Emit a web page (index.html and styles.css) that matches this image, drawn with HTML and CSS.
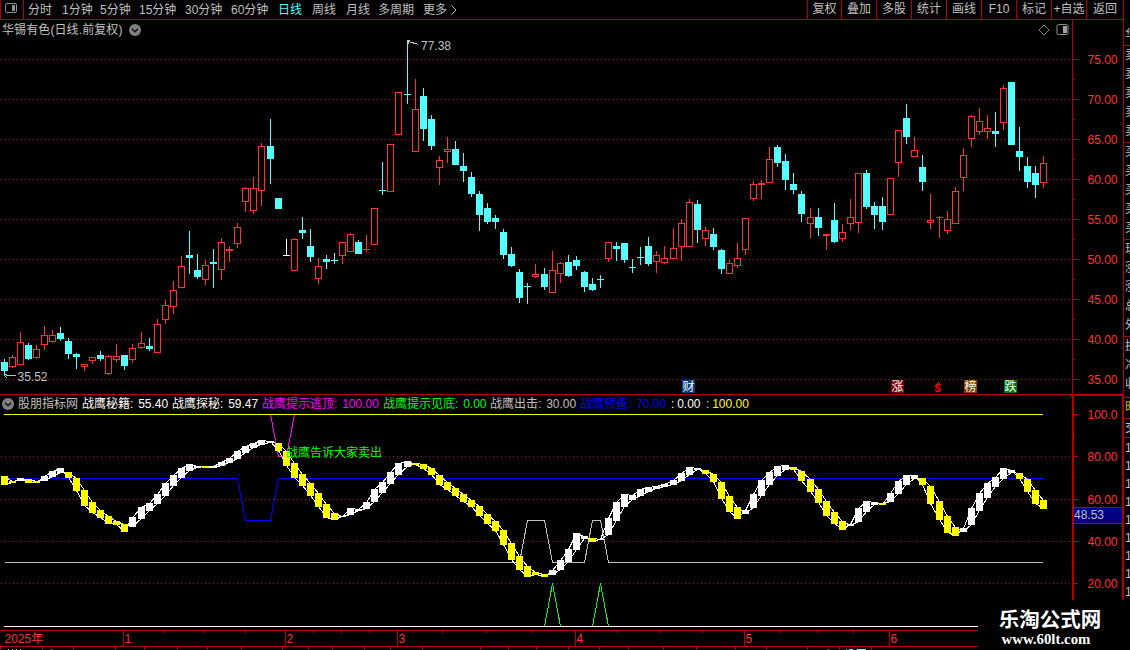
FILE: index.html
```html
<!DOCTYPE html>
<html lang="zh-CN">
<head>
    <meta charset="UTF-8">
    <meta name="viewport" content="width=device-width, initial-scale=1.0">
    <title>华锡有色 日线</title>

    <link rel="stylesheet" href="styles.css">
</head>
<body>

<div class="app">
    <div class="main">
        <div class="topbar">
            <div class="layout-btn">
                <svg width="14" height="12" viewBox="0 0 14 12">
                    <rect x="1.5" y="1.5" width="11" height="9" rx="1.5" fill="none" stroke="#909090"/>
                    <rect x="8" y="3" width="3" height="6" fill="#909090"/>
                </svg>
            </div>
            <div class="periods">
                <span>分时</span>
                <span>1分钟</span>
                <span>5分钟</span>
                <span>15分钟</span>
                <span>30分钟</span>
                <span>60分钟</span>
                <span class="active">日线</span>
                <span>周线</span>
                <span>月线</span>
                <span>多周期</span>
                <span>更多</span>
                <svg width="6" height="10" viewBox="0 0 6 10"><path d="M0.5 0.5L5 5L0.5 9.5" fill="none" stroke="#c0c0c0"/></svg>
            </div>
            <div class="tools">
                <span>复权</span>
                <span>叠加</span>
                <span>多股</span>
                <span>统计</span>
                <span>画线</span>
                <span>F10</span>
                <span>标记</span>
                <span>+自选</span>
                <span>返回</span>
            </div>
        </div>

        <div class="title-row">
            <div class="title">
                <span class="stock">华锡有色(日线.前复权)</span>
                <svg width="12" height="12" viewBox="0 0 12 12">
                    <circle cx="6" cy="6" r="6" fill="#808080"/>
                    <path d="M3 4.7L6 7.7L9 4.7" fill="none" stroke="#101010" stroke-width="1.5"/>
                </svg>
                <svg class="diamond" width="12" height="12" viewBox="0 0 12 12">
                    <path d="M6 1L11 6L6 11L1 6Z" fill="none" stroke="#808080"/>
                </svg>
                <svg width="13" height="12" viewBox="0 0 13 12">
                    <rect x="1" y="0.5" width="11" height="10" rx="1.5" fill="none" stroke="#909090"/>
                    <rect x="7" y="2" width="4" height="7" fill="#a0a0a0"/>
                </svg>
            </div>
        </div>

        <svg class="chart" id="price" width="1124" height="355" viewBox="0 39 1124 355"></svg>

        <div class="legend-row">
            <svg width="12" height="12" viewBox="0 0 12 12">
                <circle cx="6" cy="6" r="6" fill="#808080"/>
                <path d="M3 4.7L6 7.7L9 4.7" fill="none" stroke="#101010" stroke-width="1.5"/>
            </svg>
            <span>股朋指标网</span>
            <span class="white">战鹰秘籍: 55.40</span>
            <span class="white">战鹰探秘: 59.47</span>
            <span class="magenta">战鹰提示逃顶: 100.00</span>
            <span class="green">战鹰提示见底: 0.00</span>
            <span>战鹰出击: 30.00</span>
            <span class="blue">战鹰预备: 70.00</span>
            <span class="white tight">: 0.00</span>
            <span class="yellow tight">: 100.00</span>
        </div>

        <svg class="chart" id="indicator" width="1124" height="218" viewBox="0 412 1124 218"></svg>
        <svg class="chart" id="timeline" width="1124" height="20" viewBox="0 630 1124 20"></svg>
    </div>

    <div class="quote">
        <div class="cell top"><span>华</span></div>
        <div class="cell ask"><span>卖</span><span>卖</span><span>卖</span><span>卖</span><span>卖</span></div>
        <div class="cell bid"><span>买</span><span>买</span><span>买</span><span>买</span><span>买</span></div>
        <div class="cell info"><span>现</span><span>涨</span><span>涨</span><span>总</span><span>外</span></div>
        <div class="cell stat"><span>换</span><span>净</span><span>收</span></div>
        <div class="cell tab"><span>时</span></div>
        <div class="cell tab2"><span>交</span></div>
        <div class="cell ticks"><span>1</span><span>1</span><span>1</span><span>1</span><span>1</span><span>1</span><span>1</span><span>1</span><span>1</span></div>
    </div>
</div>

<div class="brand">
    <div class="brand-name">乐淘公式网</div>
    <div class="brand-url">www.60lt.com</div>
</div>

<script src="chart.js"></script>
</body>
</html>
```

FILE: styles.css
```css
body {
    margin: 0;
    background-color: #000;
    color: #c0c0c0;
    font-family: "Liberation Sans", "Noto Sans CJK SC", sans-serif;
    font-size: 12px;
    line-height: 16px;
    overflow: hidden;
}

.app {
    display: flex;
    width: 1130px;
    height: 650px;
    overflow: hidden;
}

.main {
    width: 1124px;
    flex: none;
}

/* top bar */
.topbar {
    display: flex;
    box-sizing: border-box;
    height: 20px;
    border-bottom: 1px solid #b00000;
    border-right: 1px solid #b00000;
    white-space: nowrap;
}

.layout-btn {
    box-sizing: border-box;
    width: 24px;
    padding: 2px 0 0 3px;
    border-left: 1px solid #b00000;
    border-right: 1px solid #b00000;
}

.layout-btn svg {
    display: block;
}

.periods {
    display: grid;
    grid-template-columns: 34px 38px 39px 46px 46px 47px 34px 34px 32px 45px 28px 10px;
    align-items: center;
    padding-left: 4px;
    flex: 1;
}

.periods .active {
    color: #54ffff;
}

.tools {
    display: grid;
    grid-template-columns: 34px 35px 35px 35px 35px 35px 35px 35px 37px;
}

.tools span {
    border-left: 1px solid #b00000;
    text-align: center;
    line-height: 18px;
}

/* price panel */
.title-row {
    height: 19px;
    border-right: 1px solid #b00000;
}

.title {
    display: flex;
    align-items: center;
    box-sizing: border-box;
    width: 1073px;
    height: 19px;
    padding: 0 3px 0 2px;
    border-right: 1px solid #b00000;
    gap: 6px;
}

.stock {
    letter-spacing: 0.1px;
}

.diamond {
    margin-left: auto;
}

.chart {
    display: block;
    overflow: visible;
    shape-rendering: crispEdges;
}

/* indicator panel */
.legend-row {
    display: grid;
    grid-template-columns: 16px 64px 90px 90px 121px 107px 90px 91px 35px 1fr;
    align-items: center;
    box-sizing: border-box;
    height: 18px;
    padding-left: 2px;
    border-top: 1px solid #b00000;
    border-right: 2px solid #b00000;
    background: linear-gradient(#b00000, #b00000) 1070px 0 / 52px 1px no-repeat,
                linear-gradient(#b00000, #b00000) 1072px 0 / 2px 18px no-repeat;
    white-space: nowrap;
    word-spacing: 1.5px;
}

.white { color: #fff; }
.magenta { color: #f0f; }
.green { color: #0f0; }
.blue { color: #00f; }
.yellow { color: #ff0; }

.tight {
    word-spacing: -0.5px;
}

/* quote strip, only its left edge is on screen */
.quote {
    width: 6px;
    height: 650px;
    overflow: hidden;
}

.cell {
    box-sizing: border-box;
    width: 90px;
    padding-left: 1px;
    border-bottom: 1px solid #b00000;
    overflow: hidden;
}

.cell span {
    display: block;
    height: 19px;
    line-height: 19px;
    color: #c0c0c0;
}

.top { height: 46px; padding-top: 26px; }
.ask, .bid, .info { height: 97px; }
.stat { height: 61px; }
.tab { height: 21px; }
.tab2 { height: 19px; }

.tab span {
    color: #c8c800;
}

.ticks span {
    height: 18px;
    line-height: 20px;
}

/* site mark over the lower right corner */
.brand {
    position: absolute;
    left: 978px;
    top: 600px;
    width: 152px;
    height: 50px;
    background-color: #000;
    color: #fff;
    text-align: center;
}

.brand-name {
    padding-top: 5px;
    padding-right: 8px;
    font-family: "Noto Sans CJK SC", sans-serif;
    font-size: 20.5px;
    font-weight: bold;
    line-height: 26px;
}

.brand-url {
    padding-top: 1px;
    padding-right: 16px;
    font-family: "Liberation Serif", serif;
    font-size: 14.8px;
    font-weight: bold;
    line-height: 15px;
}
```

FILE: chart.js
```js
var RED = '#ff3232';
var CYAN = '#54ffff';
var LINE = '#b00000';

// kind, high, body top, body bottom, low
var candles = [
    ['c',359,362,371,375],['r',355,357,367,368],['r',332,342,365,365],['c',343,345,359,360],['r',345,349,358,359],
    ['r',326,335,345,350],['r',330,335,342,343],['c',327,333,339,341],['c',338,341,354,359],['c',353,354,357,369],
    ['r',364,364,367,371],['r',357,357,361,364],['c',351,355,359,361],['r',355,356,374,375],['r',344,356,360,362],
    ['c',355,355,366,370],['r',344,348,360,363],['r',332,343,348,349],['c',338,346,349,351],['r',319,324,353,353],
    ['r',300,305,320,324],['r',281,290,307,314],['r',256,266,288,288],['c',231,255,258,274],['c',254,270,277,279],
    ['r',260,265,280,285],['c',249,262,264,288],['r',238,242,270,280],['r',246,249,251,262],['r',223,227,244,248],
    ['r',187,188,202,212],['r',177,188,211,214],['r',143,146,191,206],['c',119,146,159,184],['c',198,198,209,209],
    ['w',239,255,256,256],['r',238,239,271,271],['c',217,230,233,239],['c',229,246,257,262],['r',258,266,279,284],
    ['c',255,259,262,269],['c',253,260,261,264],['r',242,242,256,264],['r',233,234,252,252],['c',240,242,254,254],
    ['r',235,249,250,252],['r',208,208,245,245],['c',162,190,191,195],['r',144,144,192,192],['r',92,92,135,135],
    ['c',40,94,95,104],['r',79,109,152,152],['c',88,96,129,141],['c',115,119,146,150],['r',156,160,168,185],
    ['r',137,149,152,163],['c',141,149,165,165],['c',153,166,171,182],['c',172,177,194,197],['c',191,194,215,231],
    ['c',203,208,222,224],['c',215,218,222,229],['c',229,232,255,259],['c',247,254,266,267],['c',269,272,298,303],
    ['c',283,286,287,304],['r',264,274,277,278],['c',268,274,287,290],['r',251,270,293,293],['r',262,263,274,283],
    ['c',255,262,276,277],['c',256,260,266,270],['c',271,272,287,292],['c',278,284,290,291],['c',275,279,280,288],
    ['r',242,242,259,262],['c',242,246,249,261],['c',243,243,260,263],['c',259,267,268,273],['c',247,257,258,265],
    ['c',237,246,264,266],['r',251,255,262,273],['r',246,258,263,264],['r',228,248,259,259],['r',219,223,247,261],
    ['r',199,202,247,247],['c',200,204,230,243],['r',227,230,239,246],['c',228,234,247,250],['c',249,250,269,274],
    ['r',260,263,274,274],['r',243,258,266,268],['r',218,218,250,255],['r',181,184,199,201],['r',180,183,185,199],
    ['r',147,159,183,183],['c',145,147,163,167],['c',154,161,180,190],['c',173,184,190,194],['c',191,194,214,222],
    ['r',208,217,224,238],['c',208,217,228,236],['r',234,234,236,250],['c',203,220,242,243],['r',224,232,239,242],
    ['r',199,217,224,230],['r',173,173,223,233],['c',170,173,207,209],['c',202,206,215,229],['c',197,206,222,230],
    ['r',178,178,215,215],['r',130,130,163,177],['c',104,118,137,144],['r',137,150,157,157],['c',155,167,182,191],
    ['r',194,220,223,229],['r',216,217,218,238],['r',211,219,231,234],['r',187,191,224,224],['r',148,155,178,191],
    ['r',115,116,139,147],['r',108,121,132,135],['r',115,128,132,139],['c',112,131,134,147],['r',85,88,123,130],
    ['c',82,82,145,145],['c',127,151,157,171],['c',157,166,182,188],['c',166,173,185,198],['r',156,163,183,188]
];

// direction, top, bottom of the band between the two averages
var bands = [
    ['d',476,485],['d',481,483],['u',478,481],['d',479,483],['d',481,483],['u',476,481],['u',471,477],['u',468,473],
    ['d',472,478],['d',478,491],['d',490,506],['d',502,513],['d',510,518],['d',516,524],['d',521,525],['d',524,532],
    ['u',517,527],['u',507,519],['u',503,511],['u',494,504],['u',483,496],['u',475,486],['u',468,478],['u',464,471],
    ['u',466,468],['d',466,468],['u',466,468],['u',462,466],['u',458,463],['u',451,459],['u',446,453],['u',443,448],
    ['u',440,445],['u',441,443],['d',443,451],['d',451,466],['d',463,478],['d',474,486],['d',483,496],['d',493,507],
    ['d',504,518],['d',513,520],['u',516,517],['u',508,515],['u',509,511],['u',502,509],['u',489,502],['u',482,493],
    ['u',472,484],['u',463,475],['u',461,467],['d',463,465],['d',464,469],['d',468,475],['d',475,485],['d',482,490],
    ['d',488,496],['d',494,502],['d',500,507],['d',506,516],['d',514,524],['d',521,531],['d',530,545],['d',543,560],
    ['d',556,570],['d',566,577],['d',572,575],['d',574,577],['u',570,575],['u',560,570],['u',549,562],['u',533,550],
    ['u',536,539],['d',538,542],['u',539,540],['u',518,535],['u',502,521],['u',494,507],['u',495,500],['u',489,496],
    ['u',487,492],['u',486,489],['u',484,487],['u',480,485],['u',473,481],['u',467,475],['u',468,470],['d',470,474],
    ['d',474,482],['d',482,499],['d',496,512],['d',507,519],['u',510,514],['u',494,508],['u',480,496],['u',472,485],
    ['u',466,476],['u',465,470],['d',467,470],['d',471,481],['d',479,492],['d',489,503],['d',501,516],['d',512,524],
    ['d',521,530],['u',524,526],['u',508,522],['u',501,512],['u',502,505],['d',503,505],['u',493,502],['u',481,494],
    ['u',475,485],['u',475,479],['d',478,485],['d',486,504],['d',501,520],['d',516,533],['d',527,536],['u',528,532],
    ['u',508,525],['u',493,511],['u',483,498],['u',477,487],['u',468,479],['u',470,473],['d',473,479],['d',479,492],
    ['d',490,504],['d',500,509]
];

function barX(i) {
    return 4 + i * 8 + Math.floor((i + 0.5) / 16.64);
}

function rect(x, y, w, h, fill) {
    return `<rect x="${x}" y="${y}" width="${w}" height="${h}" fill="${fill}"/>`;
}

function text(x, y, fill, str, extra) {
    return `<text x="${x}" y="${y}" fill="${fill}" ${extra || ''}>${str}</text>`;
}

function poly(points, stroke) {
    return `<polyline points="${points.map(p => (p[0] + 0.5) + ',' + (p[1] + 0.5)).join(' ')}" fill="none" stroke="${stroke}"/>`;
}

function grid(y) {
    return `<line x1="1" y1="${y + 0.5}" x2="1072" y2="${y + 0.5}" stroke="#a01818" stroke-dasharray="1 3"/>`;
}

function badge(x, color, str) {
    return rect(x, 380, 13, 13, color) + text(x + 0.5, 391, '#fff', str);
}

function drawPrice() {
    var out = '';
    for (var p = 75; p >= 35; p -= 5) {
        var y = 59 + (75 - p) * 8;
        out += grid(y);
        out += rect(1072, y, 6, 1, LINE);
        if (p > 35) out += rect(1072, y + 20, 3, 1, LINE);
        out += text(1087.5, y + 4.5, RED, p.toFixed(2));
    }
    out += rect(1072, 39, 1, 355, LINE) + rect(1123, 39, 1, 355, LINE);

    candles.forEach(function (c, i) {
        var x = barX(i), h = c[3] - c[2];
        var color = c[0] === 'r' ? RED : c[0] === 'c' ? CYAN : '#fff';
        out += rect(x, c[1], 1, c[2] - c[1], color) + rect(x, c[3], 1, c[4] - c[3], color);
        if (c[0] === 'r' && h > 2) {
            out += `<rect x="${x - 2.5}" y="${c[2] + 0.5}" width="6" height="${h - 1}" fill="#000" stroke="${RED}"/>`;
        } else {
            out += rect(x - 3, c[2], 7, h, color);
        }
    });

    out += poly([[408, 41], [418, 44]], '#c0c0c0') + poly([[410, 39], [407, 41], [409, 44]], '#c0c0c0');
    out += text(421, 50, '#c0c0c0', '77.38');
    out += poly([[5, 375], [15, 375]], '#c0c0c0') + poly([[7, 373], [4, 375], [7, 378]], '#c0c0c0');
    out += text(17.5, 381, '#c0c0c0', '35.52');

    out += badge(682, '#003c78', '财') + badge(891, '#780000', '涨');
    out += badge(964, '#8c3c00', '榜') + badge(1004, '#007800', '跌');
    out += text(934.5, 392, '#ff0000', '$', 'font-weight="bold" font-size="11"');
    out += poly([[935, 385], [938, 382], [941, 385]], '#ff0000');
    document.getElementById('price').innerHTML = out;
}

function drawIndicator() {
    var out = '';
    [[100, 414], [80, 456], [60, 499], [40, 541], [20, 583]].forEach(function (g) {
        if (g[0] < 100) out += grid(g[1]);
        out += rect(1074, g[1], 4, 1, LINE);
        out += text(1087.5, g[1] + 4.5, RED, g[0] === 100 ? '100.0' : g[0].toFixed(2));
    });
    [435, 477, 520, 562].forEach(y => out += rect(1074, y, 1, 1, LINE));
    out += rect(1072, 412, 2, 188, LINE) + rect(1122, 412, 2, 188, LINE);
    out += rect(1074, 507, 48, 17, LINE) + rect(1074, 508, 48, 15, '#000080');
    out += text(1074, 519, '#c0c0c0', '48.53');

    out += poly([[4, 478], [237, 478], [245, 520], [270, 520], [278, 478], [1042, 478]], '#0000ff');
    out += poly([[4, 562], [519, 562], [527, 520], [544, 520], [552, 562], [584, 562], [592, 520], [600, 520], [608, 562], [1042, 562]], '#c0c0c0');
    out += poly([[270, 414], [278, 456], [286, 456], [294, 414]], '#ff00ff');
    out += poly([[544, 626], [552, 583], [560, 626]], '#00ff00');
    out += poly([[592, 626], [600, 583], [608, 626]], '#00ff00');
    out += rect(4, 414, 1039, 1, '#ffff00') + rect(4, 626, 1039, 1, '#fff');

    out += poly(bands.map((b, i) => [barX(i), b[0] === 'u' ? b[1] : b[2] - 1]), '#fff');
    out += poly(bands.map((b, i) => [barX(i), b[0] === 'u' ? b[2] - 1 : b[1]]), '#fff');
    bands.forEach(function (b, i) {
        out += rect(barX(i) - 3, b[1], 7, b[2] - b[1], b[0] === 'u' ? '#fff' : '#ffff00');
    });
    out += text(286, 457, '#00ff00', '战鹰告诉大家卖出');
    document.getElementById('indicator').innerHTML = out;
}

function drawTimeline() {
    var out = rect(0, 630, 1124, 1, LINE) + rect(0, 646, 1124, 1, LINE);
    [164, 204, 245, 313, 341, 369, 442, 486, 531, 617, 660, 702, 780, 817, 853].forEach(x => out += rect(x, 631, 1, 2, LINE));
    [0, 42, 73, 115, 144, 177, 207, 241, 282, 308, 332, 364, 390, 422, 480, 508, 536, 568, 599, 628, 663, 696, 735, 766, 807, 839, 871]
        .forEach(x => out += rect(x, 647, 1, 3, LINE));
    out += text(4.5, 643, RED, '2025年');
    [[123, 1], [285, 2], [397, 3], [575, 4], [744, 5], [889, 6]].forEach(function (m) {
        out += rect(m[0], 631, 1, 15, LINE) + text(m[0] + 1.5, 643, RED, m[1]);
    });
    // tops of the next row
    [8, 12, 16, 20, 51, 828, 846, 850].forEach(x => out += rect(x, 649, 1, 1, '#c0c0c0'));
    out += rect(849, 649, 4, 1, CYAN) + rect(857, 649, 9, 1, CYAN);
    document.getElementById('timeline').innerHTML = out;
}

drawPrice();
drawIndicator();
drawTimeline();
```
